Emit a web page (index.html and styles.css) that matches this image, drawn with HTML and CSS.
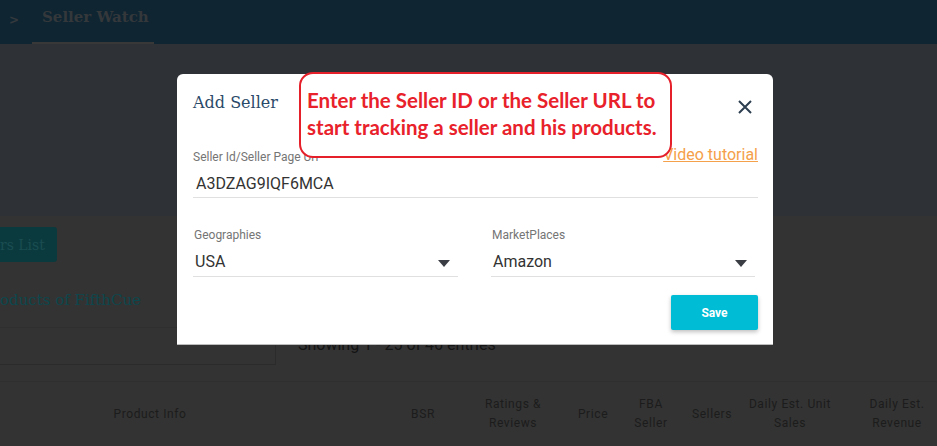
FILE: index.html
```html
<!DOCTYPE html>
<html lang="en">
<head>
<meta charset="utf-8">
<title>Seller Watch</title>
<link rel="stylesheet" href="styles.css">
</head>
<body>
<header class="topbar">
  <span class="crumb">&gt;</span>
  <div class="tab">Seller Watch</div>
</header>
<main class="page">
  <section class="hero"></section>
  <section class="content">
    <div class="btn-row"><button class="list-btn">rs List</button></div>
    <h2 class="products-title">oducts of FifthCue</h2>
    <div class="filter-row">
      <div class="search-box"></div>
      <div class="showing">Showing 1 - 25 of 46 entries</div>
    </div>
    <div class="table-head">
      <div class="th">Product Info</div>
      <div class="th th-bsr">BSR</div>
      <div class="th">Ratings &amp;<br>Reviews</div>
      <div class="th">Price</div>
      <div class="th">FBA<br>Seller</div>
      <div class="th">Sellers</div>
      <div class="th">Daily Est. Unit<br>Sales</div>
      <div class="th th-rev">Daily Est.<br>Revenue</div>
    </div>
  </section>
</main>

<div class="modal">
  <div class="modal-head">
    <h3 class="modal-title">Add Seller</h3>
    <svg class="close" width="14" height="14" viewBox="0 0 14 14"><path d="M1 1 L13 13 M13 1 L1 13" stroke="#2c3e50" stroke-width="2" fill="none"/></svg>
  </div>
  <div class="label-row">
    <span class="label">Seller Id/Seller Page Url</span>
    <a class="video-link">Video tutorial</a>
  </div>
  <div class="field-value">A3DZAG9IQF6MCA</div>
  <div class="select-grid">
    <div class="select">
      <div class="label">Geographies</div>
      <div class="field-value sel"><span>USA</span><i class="caret"></i></div>
    </div>
    <div class="select">
      <div class="label">MarketPlaces</div>
      <div class="field-value sel"><span>Amazon</span><i class="caret"></i></div>
    </div>
  </div>
  <div class="actions"><button class="save">Save</button></div>
</div>

<div class="callout">Enter the Seller ID or the Seller URL to<br>start tracking a seller and his products.</div>
</body>
</html>
```
FILE: styles.css
```css
* { box-sizing: border-box; }
html, body { margin: 0; padding: 0; }
body {
  background: #333333;
  font-family: Roboto, "Liberation Sans", sans-serif;
  width: 937px;
  height: 446px;
  overflow: hidden;
  position: relative;
}
.topbar {
  height: 44px;
  background: #0f2532;
  display: flex;
  align-items: stretch;
}
.crumb {
  color: #34393d;
  font-family: "DejaVu Sans", sans-serif;
  font-weight: bold;
  font-size: 12px;
  padding: 13px 0 0 9px;
  width: 32px;
}
.tab {
  width: 122px;
  padding: 8px 0 0 10px;
  font-family: "DejaVu Serif", serif;
  font-size: 15px;
  font-weight: bold;
  color: #34383b;
  white-space: nowrap;
  border-bottom: 2px solid #383838;
}
.hero {
  height: 172px;
  background: #2e3236;
}
.content { background: #333333; }
.btn-row { padding-top: 11px; }
.list-btn {
  display: block;
  width: 57px;
  height: 35px;
  border: 0;
  border-radius: 0 3px 3px 0;
  background: #0b3a3e;
  color: #1a4d51;
  font-family: "DejaVu Serif", serif;
  font-size: 14px;
  text-align: right;
  white-space: nowrap;
  padding: 0 14px 0 0;
}
.products-title {
  margin: 0;
  padding-top: 28px;
  height: 65px;
  font-family: "DejaVu Serif", serif;
  font-weight: normal;
  font-size: 15px;
  color: #0d474d;
  line-height: 20px;
  white-space: nowrap;
}
.filter-row {
  display: flex;
  height: 55px;
  border-bottom: 1px solid #2f2f2f;
}
.search-box {
  width: 276px;
  height: 38px;
  border-top: 1px solid #2f2f2f;
  border-right: 1px solid #2b2b2b;
  border-bottom: 1px solid #2b2b2b;
}
.showing {
  padding: 8px 0 0 22px;
  font-size: 16px;
  color: #141414;
  line-height: 20px;
}
.table-head {
  display: grid;
  grid-template-columns: 300px 76px 94px 86px 74px 42px 80px 76px 30px 78px;
  height: 64px;
  align-items: center;
}
.th {
  display: flex;
  flex-direction: column;
  align-items: center;
  text-align: center;
  white-space: nowrap;
  font-size: 12px;
  letter-spacing: 0.6px;
  line-height: 19px;
  color: #1c1c1c;
  min-width: 0;
}
.th-bsr { grid-column-start: 3; }
.th-rev { grid-column-start: 10; }

/* modal */
.modal {
  position: absolute;
  left: 177px;
  top: 74px;
  width: 596px;
  height: 271px;
  background: #ffffff;
  border-radius: 6px 6px 0 0;
  border-bottom: 1px solid #bdbdbd;
  padding: 17px 15px 0 16px;
}
.modal-head {
  display: flex;
  justify-content: space-between;
  align-items: center;
  height: 24px;
}
.modal-title {
  margin: 0;
  font-family: "DejaVu Serif", serif;
  font-weight: normal;
  font-size: 16px;
  color: #2b4a69;
  line-height: 24px;
}
.close { margin: 7px 6px 0 0; }
.label-row {
  margin-top: 33px;
  height: 18px;
  display: flex;
  justify-content: space-between;
  align-items: flex-end;
}
.label {
  font-size: 12px;
  line-height: 18px;
  color: #757575;
}
.video-link {
  font-size: 16px;
  line-height: 18px;
  color: #f5a04a;
  text-decoration: underline;
  margin-bottom: 2px;
}
.field-value {
  height: 32px;
  padding: 6px 0 0 3px;
  font-size: 16px;
  line-height: 24px;
  color: #333333;
  border-bottom: 1px solid #e0e0e0;
}
.select-grid {
  margin-top: 28px;
  display: grid;
  grid-template-columns: 265px 264px;
  column-gap: 33px;
}
.select .label { padding-left: 1px; }
.sel {
  display: flex;
  justify-content: space-between;
  align-items: center;
  height: 33px;
  padding: 6px 8px 2px 2px;
}
.caret {
  width: 0;
  height: 0;
  border-left: 6px solid transparent;
  border-right: 6px solid transparent;
  border-top: 7px solid #3a3d44;
  margin-top: 3px;
}
.actions {
  display: flex;
  justify-content: flex-end;
  margin-top: 18px;
}
.save {
  width: 87px;
  height: 35px;
  border: 0;
  border-radius: 2px;
  background: #00bcd4;
  color: #ffffff;
  font-family: Roboto, sans-serif;
  font-weight: bold;
  font-size: 12px;
  box-shadow: 0 2px 4px rgba(0,0,0,0.25);
}
.callout {
  position: absolute;
  left: 299px;
  top: 72px;
  width: 373px;
  height: 86px;
  border: 2px solid #e5202a;
  border-radius: 14px;
  background: #ffffff;
  padding: 13px 0 0 6px;
  font-family: Lato, "Open Sans", sans-serif;
  font-weight: bold;
  font-size: 20.5px;
  line-height: 27px;
  color: #e8212b;
  white-space: nowrap;
}
```
